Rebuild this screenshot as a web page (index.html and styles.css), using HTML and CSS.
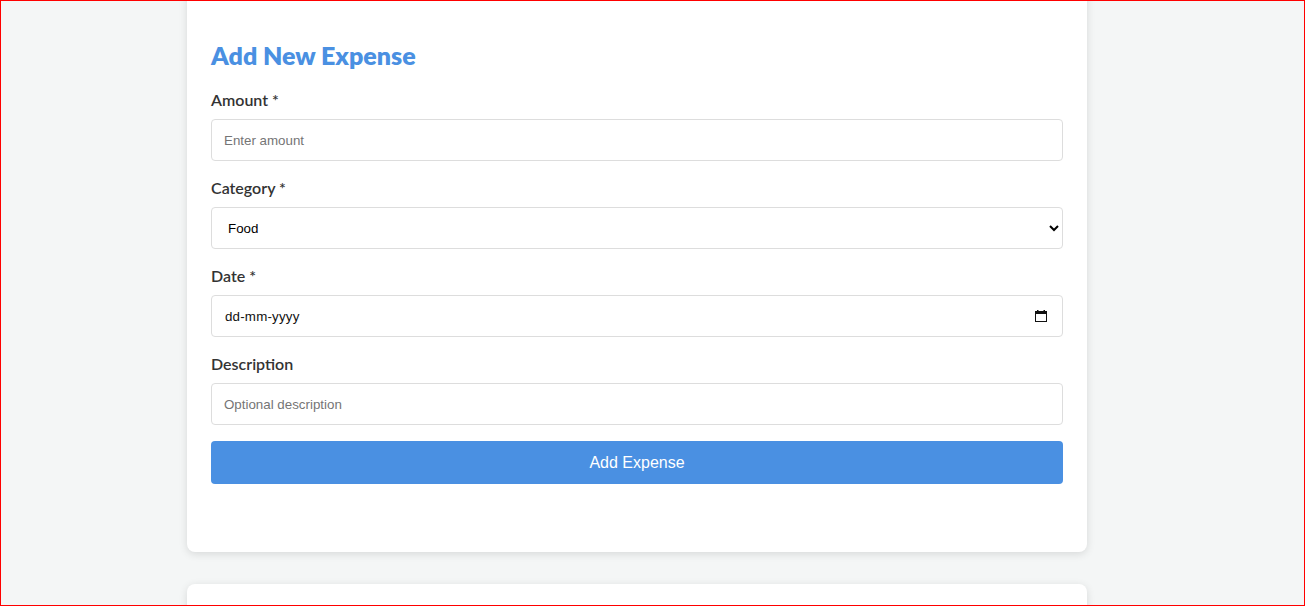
FILE: index.html
```html
<!DOCTYPE html>
<html lang="en">
<head>
<meta charset="utf-8">
<title>Expense Tracker</title>
<link rel="stylesheet" href="styles.css">
</head>
<body>
<div class="frame"></div>
<main class="container">
  <section class="card">
    <h2 class="card-title">Add New Expense</h2>
    <form class="expense-form">
      <div class="form-group">
        <label class="form-label" for="amount">Amount *</label>
        <input class="form-control" id="amount" type="number" placeholder="Enter amount">
      </div>
      <div class="form-group">
        <label class="form-label" for="category">Category *</label>
        <select class="form-control form-select" id="category">
          <option>Food</option>
          <option>Transport</option>
          <option>Shopping</option>
          <option>Bills</option>
          <option>Other</option>
        </select>
      </div>
      <div class="form-group">
        <label class="form-label" for="date">Date *</label>
        <div class="date-field">
          <input class="form-control form-date" id="date" type="text" placeholder="dd-mm-yyyy">
          <svg class="date-icon" width="12" height="12" viewBox="0 0 12 12" aria-hidden="true">
            <rect x="0.5" y="1.5" width="11" height="10" fill="none" stroke="#111" stroke-width="1"/>
            <rect x="0" y="1" width="12" height="3" fill="#111"/>
            <rect x="2" y="0" width="1.5" height="2" fill="#111"/>
            <rect x="8.5" y="0" width="1.5" height="2" fill="#111"/>
          </svg>
        </div>
      </div>
      <div class="form-group">
        <label class="form-label" for="desc">Description</label>
        <input class="form-control" id="desc" type="text" placeholder="Optional description">
      </div>
      <button class="btn-primary" type="button">Add Expense</button>
    </form>
  </section>
  <section class="card card-next"></section>
</main>
</body>
</html>
```
FILE: styles.css
```css
html, body {
  margin: 0;
  padding: 0;
  height: 100%;
  overflow: hidden;
}

body {
  background: #f4f6f6;
  font-family: Lato, "Noto Sans", sans-serif;
  color: #333;
}

.frame {
  position: fixed;
  inset: 0;
  border: 1px solid #ff0000;
  pointer-events: none;
  z-index: 10;
}

.container {
  width: 900px;
  margin: -13px 0 0 187px;
}

.card {
  background: #fff;
  border-radius: 8px;
  box-shadow: 0 2px 8px rgba(0, 0, 0, 0.12);
  padding: 51px 24px 68px;
  margin-bottom: 32px;
}

.card-next {
  height: 120px;
  padding: 0;
}

.card-title {
  margin: 0 0 17px;
  font-size: 25px;
  line-height: 34px;
  font-weight: 800;
  color: #4a90e2;
}

.form-group {
  margin-bottom: 16px;
}

.form-label {
  display: block;
  font-size: 16px;
  line-height: 22px;
  font-weight: 600;
  color: #333;
  margin-bottom: 8px;
}

.form-control {
  display: block;
  box-sizing: border-box;
  width: 100%;
  height: 42px;
  padding: 12px;
  border: 1px solid #ddd;
  border-radius: 4px;
  background: #fff;
  font-family: "Liberation Sans", Arial, sans-serif;
  font-size: 13.33px;
  color: #000;
}

.form-control::placeholder {
  color: #757575;
}

.form-select {
  padding: 0 8px 0 12px;
}

.date-field {
  position: relative;
}

.form-date {
  padding-left: 13px;
}

.form-date::placeholder {
  color: #111;
  letter-spacing: 0.2px;
}

.date-icon {
  position: absolute;
  right: 16px;
  top: 15px;
}

.btn-primary {
  display: block;
  width: 100%;
  height: 43px;
  border: none;
  border-radius: 4px;
  background: #4a90e2;
  color: #fff;
  font-family: "Liberation Sans", Arial, sans-serif;
  font-size: 16px;
  cursor: pointer;
}
```
